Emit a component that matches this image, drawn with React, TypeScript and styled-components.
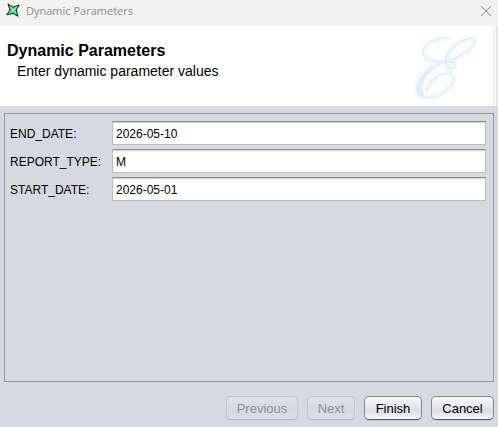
import React, { useState } from "react";
import styled, { createGlobalStyle } from "styled-components";

const GlobalStyle = createGlobalStyle`
  *, *::before, *::after { box-sizing: border-box; }
  body {
    margin: 0;
    background: #d6d9df;
    font-family: "Liberation Sans", Arial, sans-serif;
    color: #000;
  }
`;

const Dialog = styled.main`
  display: flex;
  flex-direction: column;
  min-height: 100vh;
`;

const TitleBar = styled.header`
  display: flex;
  align-items: center;
  height: 26px;
  padding: 0 6px 4px;
  background: #f2f2f2;
`;

const WindowTitle = styled.span`
  flex: 1;
  margin-left: 6px;
  font-family: "Open Sans", "Noto Sans", sans-serif;
  font-size: 11px;
  line-height: 20px;
  color: #8c8c8c;
`;

const CloseButton = styled.button`
  display: flex;
  padding: 0;
  border: 0;
  background: none;
  color: #8a8a8a;
`;

const Banner = styled.section`
  display: flex;
  justify-content: space-between;
  height: 80px;
  padding: 0 13px 0 7px;
  background:
    linear-gradient(90deg, #eeeefc 2px, #fff 2px, #fff 3px, #e2e2f8 3px) right / 5px 100% no-repeat,
    #fff;
`;

const BannerText = styled.div`
  padding-top: 15px;
`;

const Heading = styled.h1`
  margin: 0;
  font-size: 16px;
  line-height: 20px;
`;

const Subheading = styled.p`
  margin: 0 0 0 10px;
  font-size: 14px;
  line-height: 20px;
`;

const Content = styled.form`
  display: flex;
  flex: 1;
  flex-direction: column;
  padding: 7px 4px;
`;

const Panel = styled.div`
  display: grid;
  flex: 1;
  grid-template-columns: 98px 1fr;
  grid-auto-rows: 24px;
  align-content: start;
  align-items: center;
  gap: 4px;
  padding: 7px 7px 7px 5px;
  border: 1px solid #9297a1;
`;

const Label = styled.label`
  padding-top: 1px;
  font-size: 12px;
  line-height: 24px;
  white-space: nowrap;
`;

const Field = styled.input`
  width: 100%;
  min-width: 0;
  height: 24px;
  padding: 1px 3px 0;
  border: 1px solid #b9bcc1;
  border-top-color: #8d8e8f;
  border-radius: 0;
  background: #fff;
  box-shadow: inset 0 1px #d4d5d6, inset 0 2px #f4f4f4;
  color: #000;
  font-family: inherit;
  font-size: 12px;
  outline: 0;
`;

const Actions = styled.div`
  display: flex;
  justify-content: flex-end;
  gap: 9px;
  padding-top: 14px;
`;

const ActionButton = styled.button<{ $width: number }>`
  width: ${({ $width }) => $width}px;
  height: 24px;
  padding: 1px 0 0;
  border: 1px solid #85878c;
  border-bottom-color: #55585f;
  border-radius: 5px;
  background: linear-gradient(#f8f9fa, #e4e6ea 48%, #dbdee4 60%, #f2f4f8);
  box-shadow: 0 1px #c2c5cb;
  color: #000;
  font-family: inherit;
  font-size: 13px;
  line-height: 21px;

  &:disabled {
    border-color: #c4c6cb;
    border-bottom-color: #b4b7bd;
    background: linear-gradient(#dfe2e6, #d6d9df 60%, #dbdee4);
    box-shadow: 0 1px #d0d3d9;
    color: #8e8f91;
  }
`;

const AppIcon = () => (
  <svg width="14" height="16" viewBox="0 0 14 16" aria-hidden="true">
    <path
      d="M2 1L7 4.2L13.2 2L10.2 7L12 13.3L7 10.4L.8 11.8L4 7Z"
      fill="#49dc83"
      stroke="#0b1d13"
      strokeWidth="1"
      strokeLinejoin="round"
    />
    <path d="M3.5 10L11 3.8M4 3.5L10 10.5" stroke="#9af7bb" strokeWidth="1" />
  </svg>
);

const CloseIcon = () => (
  <svg width="12" height="12" viewBox="0 0 12 12" aria-hidden="true">
    <path d="M1 1L11 11M11 1L1 11" stroke="currentColor" strokeWidth="1" />
  </svg>
);

const swash =
  "M131 31C92 29 55 48 55 74C55 99 92 104 122 98C160 91 212 60 209 38C206 22 170 34 145 57C124 76 118 98 124 113C130 127 149 121 149 111C148 102 131 100 112 105C65 117 34 156 35 184C37 215 84 216 117 193C144 174 156 148 138 138C113 127 72 155 65 188";

const ScriptE = () => (
  <svg width="80" height="78" viewBox="0 0 240 234" fill="none" aria-hidden="true">
    <defs>
      <filter id="glow" x="-20%" y="-20%" width="140%" height="140%">
        <feGaussianBlur stdDeviation="5" />
      </filter>
    </defs>
    <path d={swash} stroke="#eff7ff" strokeWidth="16" filter="url(#glow)" />
    <path d={swash} stroke="#dfe9fb" strokeWidth="3" />
    <path
      d="M145 57C124 76 118 98 124 113C120 96 128 76 150 54ZM112 105C65 117 34 156 35 184C36 201 49 209 62 209C40 192 48 137 112 105Z"
      fill="#e1ebfb"
      stroke="#e1ebfb"
      strokeWidth="2"
    />
  </svg>
);

const LogoSlot = styled.div`
  padding-top: 2px;
`;

const initialValues: Record<string, string> = {
  END_DATE: "2026-05-10",
  REPORT_TYPE: "M",
  START_DATE: "2026-05-01",
};

const buttons = [
  { label: "Previous", width: 72, disabled: true },
  { label: "Next", width: 48, disabled: true },
  { label: "Finish", width: 58, disabled: false },
  { label: "Cancel", width: 63, disabled: false },
];

export default function App() {
  const [values, setValues] = useState(initialValues);

  return (
    <>
      <GlobalStyle />
      <Dialog>
        <TitleBar>
          <AppIcon />
          <WindowTitle>Dynamic Parameters</WindowTitle>
          <CloseButton type="button" aria-label="Close">
            <CloseIcon />
          </CloseButton>
        </TitleBar>
        <Banner>
          <BannerText>
            <Heading>Dynamic Parameters</Heading>
            <Subheading>Enter dynamic parameter values</Subheading>
          </BannerText>
          <LogoSlot>
            <ScriptE />
          </LogoSlot>
        </Banner>
        <Content onSubmit={(event) => event.preventDefault()}>
          <Panel>
            {Object.keys(values).map((name) => (
              <React.Fragment key={name}>
                <Label htmlFor={name}>{name}:</Label>
                <Field
                  id={name}
                  value={values[name]}
                  onChange={(event) => setValues({ ...values, [name]: event.target.value })}
                />
              </React.Fragment>
            ))}
          </Panel>
          <Actions>
            {buttons.map(({ label, width, disabled }) => (
              <ActionButton key={label} type="button" $width={width} disabled={disabled}>
                {label}
              </ActionButton>
            ))}
          </Actions>
        </Content>
      </Dialog>
    </>
  );
}
